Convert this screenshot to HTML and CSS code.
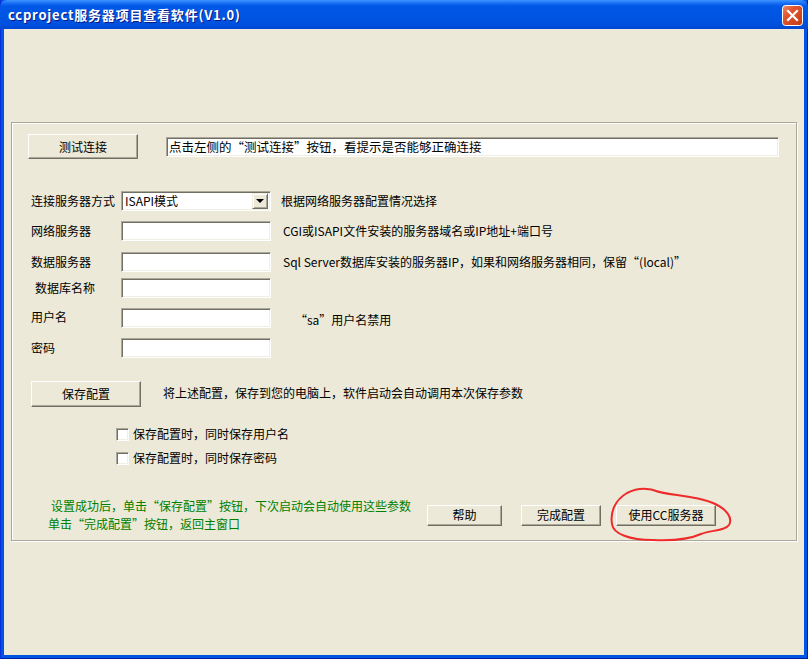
FILE: index.html
```html
<!DOCTYPE html>
<html lang="zh-CN">
<head>
    <meta charset="UTF-8">
    <title>ccproject服务器项目查看软件(V1.0)</title>
    <link rel="stylesheet" href="styles.css">
</head>
<body>
    <div class="window">
        <div class="titlebar">
            <span class="title">ccproject服务器项目查看软件(V1.0)</span>
            <span class="close-btn">
                <svg width="21" height="21" viewBox="0 0 21 21">
                    <defs>
                        <linearGradient id="closeGrad" x1="0" y1="0" x2="1" y2="1">
                            <stop offset="0" stop-color="#F08A6A"/>
                            <stop offset="0.35" stop-color="#E0552E"/>
                            <stop offset="1" stop-color="#C13A14"/>
                        </linearGradient>
                    </defs>
                    <rect x="0.5" y="0.5" width="20" height="20" rx="3" fill="url(#closeGrad)" stroke="#FFFFFF"/>
                    <path d="M6 6 L15 15 M15 6 L6 15" stroke="#FFFFFF" stroke-width="2.2" stroke-linecap="square"/>
                </svg>
            </span>
        </div>

        <div class="client">
            <div class="group">
                <div class="row row-test">
                    <button class="btn btn-test">测试连接</button>
                    <div class="textbox hint-box">点击左侧的“测试连接”按钮，看提示是否能够正确连接</div>
                </div>

                <div class="row row-select">
                    <span class="label">连接服务器方式</span>
                    <div class="combo">
                        <span class="combo-text">ISAPI模式</span>
                        <span class="combo-arrow"></span>
                    </div>
                    <span class="hint hint-select">根据网络服务器配置情况选择</span>
                </div>

                <div class="row row-field row-net">
                    <span class="label">网络服务器</span>
                    <div class="textbox field"></div>
                    <span class="hint">CGI或ISAPI文件安装的服务器域名或IP地址+端口号</span>
                </div>

                <div class="row row-field row-data">
                    <span class="label">数据服务器</span>
                    <div class="textbox field"></div>
                    <span class="hint">Sql Server数据库安装的服务器IP，如果和网络服务器相同，保留“(local)”</span>
                </div>

                <div class="row row-field row-db">
                    <span class="label label-indent">数据库名称</span>
                    <div class="textbox field"></div>
                </div>

                <div class="row row-field row-user">
                    <span class="label">用户名</span>
                    <div class="textbox field"></div>
                    <span class="hint hint-sa">“sa”用户名禁用</span>
                </div>

                <div class="row row-field row-pwd">
                    <span class="label">密码</span>
                    <div class="textbox field"></div>
                </div>

                <div class="row row-save">
                    <button class="btn btn-save">保存配置</button>
                    <span class="hint hint-save">将上述配置，保存到您的电脑上，软件启动会自动调用本次保存参数</span>
                </div>

                <div class="row row-check row-check1">
                    <span class="checkbox"></span>
                    <span class="check-text">保存配置时，同时保存用户名</span>
                </div>

                <div class="row row-check row-check2">
                    <span class="checkbox"></span>
                    <span class="check-text">保存配置时，同时保存密码</span>
                </div>

                <div class="row row-bottom">
                    <div class="tips">
                        <div class="tip tip-first">设置成功后，单击“保存配置”按钮，下次启动会自动使用这些参数</div>
                        <div class="tip">单击“完成配置”按钮，返回主窗口</div>
                    </div>
                    <button class="btn btn-help">帮助</button>
                    <button class="btn btn-done">完成配置</button>
                    <button class="btn btn-cc">使用CC服务器</button>
                </div>
            </div>
        </div>

        <!-- 手绘红圈标注 -->
        <svg class="annotation" width="132" height="62" viewBox="0 0 132 62">
            <path d="M48,6 C62,12 86,10 108,19 C122,25 128,34 124,41 C120,47 106,46 96,50 C85,55 70,57 48,56 C25,56 8,50 7,40 C5,28 10,16 22,9 C32,4 42,3 54,8"
                  fill="none" stroke="#EE2B2B" stroke-width="2" stroke-linecap="round" stroke-linejoin="round"/>
        </svg>
    </div>
</body>
</html>
```

FILE: styles.css
```css
* {
    box-sizing: border-box;
}

body {
    margin: 0;
    font-family: "Noto Sans CJK SC", "Liberation Sans", sans-serif;
    font-size: 12px;
    color: #000000;
    background-color: #ECE9D8;
}

.window {
    position: relative;
    width: 808px;
    height: 659px;
    display: flex;
    flex-direction: column;
    background-color: #0054E3;
    box-shadow: inset 1px 0 #0831D9, inset -1px 0 #001EA0, inset 0 -1px #001EA0;
}

.titlebar {
    height: 29px;
    display: flex;
    align-items: center;
    justify-content: space-between;
    padding: 0 5px 0 8px;
    background: linear-gradient(to bottom, #3D95FF 0, #1C70F4 3px, #0058E6 6px, #0055E3 50%, #0050DE 85%, #0046D2 100%);
    border-radius: 7px 7px 0 0;
}

.title {
    color: #ffffff;
    font-size: 13px;
    font-weight: bold;
    letter-spacing: 0.8px;
    line-height: 16px;
    text-shadow: 1px 1px 0 #0A1883;
    padding-top: 1px;
}

.close-btn {
    width: 21px;
    height: 21px;
    display: flex;
    margin-top: 1px;
}

.client {
    flex: 1;
    margin: 0 4px 4px 4px;
    background-color: #ECE9D8;
    padding-top: 93px;
    padding-left: 7px;
}

.group {
    width: 786px;
    height: 419px;
    border: 1px solid #ACA899;
    box-shadow: inset 1px 1px 0 #ffffff, 1px 1px 0 #ffffff;
}

.row {
    display: flex;
    align-items: center;
}

.btn {
    font-family: "Noto Sans CJK SC", sans-serif;
    font-size: 12px;
    line-height: 14px;
    color: #000000;
    background-color: #ECE9D8;
    border: 1px solid;
    border-color: #ffffff #716F64 #716F64 #ffffff;
    box-shadow: inset -1px -1px 0 #ACA899;
    padding: 0;
    margin: 0;
}

.textbox {
    background-color: #ffffff;
    border: 1px solid;
    border-color: #ACA899 #ffffff #ffffff #ACA899;
    box-shadow: inset 1px 1px 0 #716F64, inset -1px -1px 0 #F1EFE2;
}

/* 测试连接 */
.row-test {
    margin-top: 11px;
    height: 25px;
}

.btn-test {
    width: 110px;
    height: 25px;
    margin-left: 16px;
}

.hint-box {
    width: 613px;
    height: 20px;
    margin-left: 28px;
    padding: 0 0 0 2px;
    font-size: 12.5px;
    line-height: 18px;
    white-space: nowrap;
}

/* 表单 */
.label {
    width: 109px;
    padding-left: 19px;
    white-space: nowrap;
    line-height: 16px;
}

.label-indent {
    padding-left: 23px;
}

.hint {
    margin-left: 12px;
    white-space: nowrap;
    line-height: 16px;
}

.row-select {
    margin-top: 32px;
    height: 20px;
}

.combo {
    width: 150px;
    height: 20px;
    display: flex;
    align-items: center;
    justify-content: space-between;
    background-color: #ffffff;
    border: 1px solid;
    border-color: #ACA899 #ffffff #ffffff #ACA899;
    box-shadow: inset 1px 1px 0 #716F64, inset -1px -1px 0 #F1EFE2;
    padding: 0 2px 0 3px;
}

.combo-text {
    line-height: 16px;
}

.combo-arrow {
    position: relative;
    width: 16px;
    height: 16px;
    background-color: #ECE9D8;
    border: 1px solid;
    border-color: #F1EFE2 #716F64 #716F64 #F1EFE2;
    box-shadow: inset 1px 1px 0 #ffffff, inset -1px -1px 0 #ACA899;
}

.combo-arrow::after {
    content: "";
    position: absolute;
    left: 3px;
    top: 5px;
    border-left: 4px solid transparent;
    border-right: 4px solid transparent;
    border-top: 4px solid #000000;
}

.hint-select {
    margin-left: 10px;
}

.row-field {
    height: 20px;
}

.field {
    width: 150px;
    height: 20px;
}

.row-net {
    margin-top: 10px;
}

.row-data {
    margin-top: 11px;
}

.row-db {
    margin-top: 6px;
}

.row-user {
    margin-top: 10px;
}

.row-user .label {
    margin-top: -3px;
}

.hint-sa {
    margin-left: 24px;
    margin-top: 3px;
}

.row-pwd {
    margin-top: 10px;
}

/* 保存配置 */
.row-save {
    margin-top: 23px;
    height: 26px;
}

.btn-save {
    width: 110px;
    height: 26px;
    margin-left: 19px;
}

.hint-save {
    margin-left: 22px;
    margin-top: -2px;
}

.row-check {
    height: 16px;
    padding-left: 104px;
}

.row-check1 {
    margin-top: 19px;
}

.row-check2 {
    margin-top: 8px;
}

.checkbox {
    width: 13px;
    height: 13px;
    background-color: #ffffff;
    border: 1px solid;
    border-color: #ACA899 #ffffff #ffffff #ACA899;
    box-shadow: inset 1px 1px 0 #716F64, inset -1px -1px 0 #F1EFE2;
}

.check-text {
    margin-left: 4px;
    line-height: 16px;
}

/* 底部 */
.row-bottom {
    margin-top: 31px;
    height: 36px;
    padding-left: 36px;
}

.tips {
    width: 379px;
    color: #008000;
}

.tip {
    line-height: 18px;
    white-space: nowrap;
}

.tip-first {
    padding-left: 3px;
}

.btn-help {
    width: 75px;
    height: 21px;
}

.btn-done {
    width: 80px;
    height: 21px;
    margin-left: 19px;
}

.btn-cc {
    width: 100px;
    height: 21px;
    margin-left: 15px;
}

.annotation {
    position: absolute;
    left: 605px;
    top: 484px;
}
```
